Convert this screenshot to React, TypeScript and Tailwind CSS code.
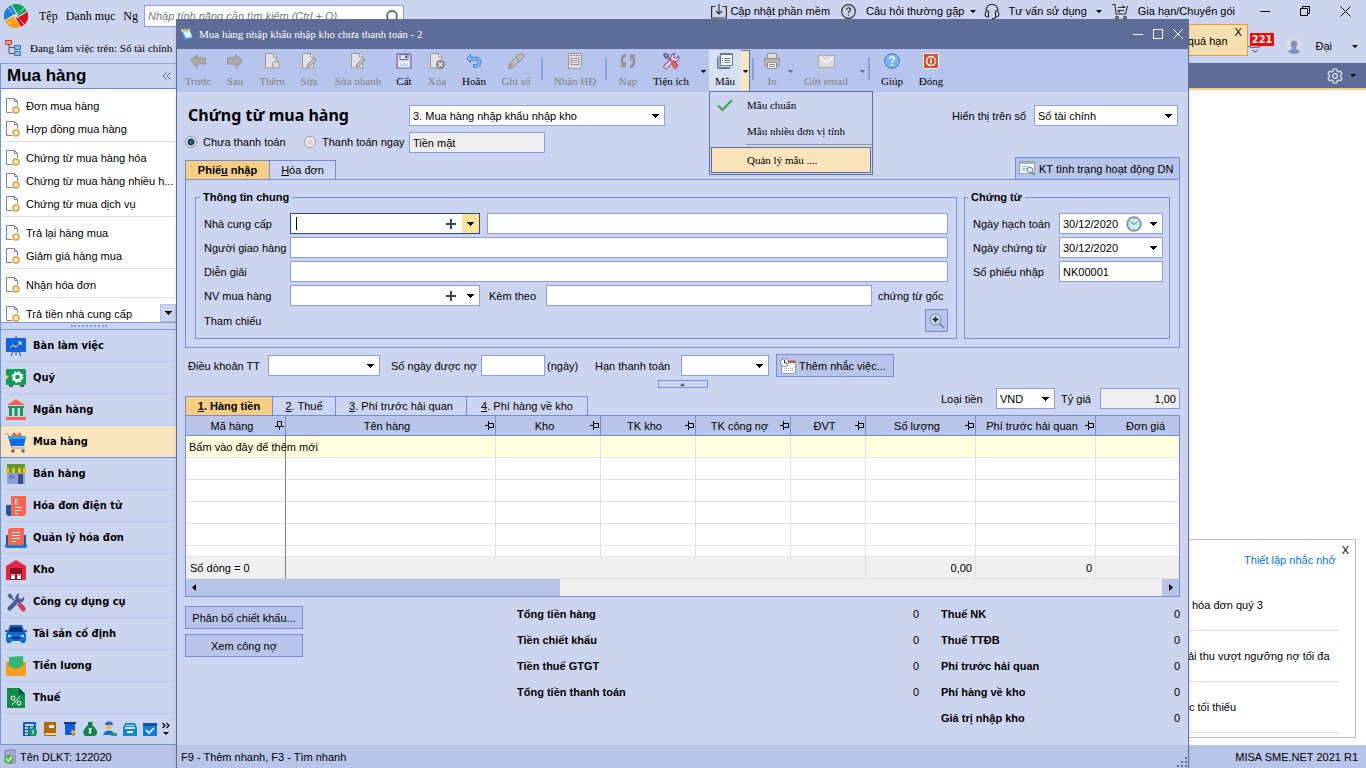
import type { ReactNode } from "react";

const Caret = ({ className = "" }: { className?: string }) => (
  <svg width="7" height="4" viewBox="0 0 7 4" className={`shrink-0 ${className}`} fill="currentColor">
    <path d="M0 0h7v1H6v1H5v1H4v1H3V3H2V2H1V1H0z" />
  </svg>
);

const PlusMark = () => (
  <svg width="10" height="10" viewBox="0 0 10 10" fill="#34457e">
    <path d="M4 0h2v4h4v2H6v4H4V6H0V4h4z" />
  </svg>
);

const DocIcon = () => (
  <svg width="14" height="16" viewBox="0 0 14 16" className="shrink-0">
    <path d="M.5.5h8l3 3v11H.5z" fill="#fff" stroke="#76879c" />
    <path d="M8.5.5v3h3" fill="none" stroke="#76879c" />
    <circle cx="10" cy="12" r="4.5" fill="#fff" />
    <circle cx="10" cy="12" r="3" fill="#ffe9a3" stroke="#c9a44e" strokeWidth="1.4" />
  </svg>
);

const GrayDoc = ({ mark }: { mark: ReactNode }) => (
  <svg width="18" height="18" viewBox="0 0 18 18">
    <path d="M2.5 1.5h8l3 3.5v11h-11z" fill="#e2e2e6" stroke="#999" />
    <path d="M10.5 1.5v3.5h3" fill="#fff" stroke="#999" />
    {mark}
  </svg>
);

const pencilMark = <path d="M7 15l1-3 6-6 2 2-6 6z" fill="#c4c4c4" stroke="#888" />;

const arrowIcon = (
  <svg width="18" height="16" viewBox="0 0 18 16">
    <path d="M1.5 8L8 1.5V5h8.5v6H8v3.5z" fill="#aaa" stroke="#909090" />
  </svg>
);

const toolsPath = (
  <>
    <path d="M13.5 1.5a4.5 4.5 0 0 0-4 6L2 15a2 2 0 0 0 3 3l7.500-7.500a4.5 4.5 0 0 0 5.5-6l-2.5 2.5-2.5-.5-.5-2.5z" />
    <path d="M1.5 3l2-1.5 3 2v2L10 9l-1 1-3.5-3.5h-2z" />
  </>
);

const toolIcons: Record<string, ReactNode> = {
  "Trước": arrowIcon,
  "Sau": <span className="rotate-180">{arrowIcon}</span>,
  "Thêm": <GrayDoc mark={<circle cx="13" cy="13" r="3.5" fill="#ddd" stroke="#aaa" strokeWidth="1.5" />} />,
  "Sửa": <GrayDoc mark={pencilMark} />,
  "Sửa nhanh": <GrayDoc mark={pencilMark} />,
  "Cất": (
    <svg width="16" height="16" viewBox="0 0 16 16">
      <path d="M1 1h13l1 1v13H1z" fill="#e4d2f2" stroke="#8a70ae" strokeWidth="1.4" />
      <path d="M4 1.5h8v5H4z" fill="#d9ebf8" stroke="#6c6a8e" />
      <path d="M9 2.5h2V5H9z" fill="#555" />
      <path d="M3 9h10v5.5H3z" fill="#fff" />
      <path d="M4 11h8M4 13h8" stroke="#7bc0e0" />
    </svg>
  ),
  "Xóa": (
    <GrayDoc
      mark={
        <>
          <circle cx="12.5" cy="12.5" r="4.5" fill="#888" />
          <path d="M10.5 10.5l4 4m0-4l-4 4" stroke="#eee" strokeWidth="1.3" />
        </>
      }
    />
  ),
  "Hoãn": (
    <svg width="18" height="16" viewBox="0 0 18 16">
      <path d="M5.5 1.5v2.800H11a5 5 0 0 1 0 10H8.5v-2.800H11a2.2 2.2 0 0 0 0-4.5H5.5v2.5L1.5 5.5z" fill="#8cc0f4" stroke="#3b7cc8" />
    </svg>
  ),
  "Ghi sổ": (
    <svg width="18" height="18" viewBox="0 0 18 18">
      <path d="M1.5 16.5l2-6 8-8 2-1 3 1v3l-2 2-8 7.5z" fill="#bbb" stroke="#8a8a8a" />
      <path d="M9 6l4 4M2 16l4-5" stroke="#888" />
    </svg>
  ),
  "Nhận HĐ": (
    <svg width="16" height="16" viewBox="0 0 16 16">
      <path d="M1.5.5h13v13l-2 2h-11z" fill="#ddd" stroke="#999" />
      <path d="M3 2.5h10" stroke="#888" strokeDasharray="2 1" />
      <path d="M4 5.5h8v6H4zM4 7.5h8M4 9.5h8" fill="#f2f2f2" stroke="#999" />
    </svg>
  ),
  "Nạp": (
    <svg width="18" height="16" viewBox="0 0 18 16" fill="none" stroke="#8e8e8e" strokeWidth="2.4">
      <path d="M7 2C2.5 3 1.5 9 5 12.5M11 14c4.5-1 5.5-7 2-10.5" />
      <path d="M1.5 13.5H6V9M16.5 2.5H12V7" strokeWidth="1.6" />
    </svg>
  ),
  "Tiện ích": (
    <svg width="18" height="18" viewBox="0 0 19 20" fill="#f0d6ee" stroke="#8660a0" strokeWidth="1.2">
      {toolsPath}
      <path d="M10 11.5l2-2 5 5-1.5 3-2.5.5z" fill="#ee6a6a" stroke="#c44" />
      <path d="M1.5 3l2-1.5 3 2-.5 2-2.5 1z" fill="#8db0c4" stroke="#557" />
    </svg>
  ),
  "Mẫu": (
    <svg width="16" height="16" viewBox="0 0 16 16" fill="#fff" stroke="#5f7893">
      <path d="M3.5.5h12v12h-12z" />
      <path d="M.5 4.5v11h12M2 2.5v12h12" fill="none" />
      <path d="M3.5 1.5h12" />
      <path d="M7.5 5.5h6M7.5 7.5h6M7.5 9.5h6" stroke="#5b83b5" />
      <path d="M5 5.5h1M5 7.5h1M5 9.5h1" />
    </svg>
  ),
  "In": (
    <svg width="18" height="16" viewBox="0 0 18 16" stroke="#929292">
      <path d="M4.5.5h9v5h-9z" fill="#ddd" />
      <path d="M1.5 5.5h15v7h-15z" fill="#b5b5b5" />
      <path d="M4.5 9.5h9v6h-9z" fill="#eee" />
      <path d="M6 11.5h6M6 13.5h6" />
    </svg>
  ),
  "Gửi email": (
    <svg width="17" height="13" viewBox="0 0 17 13">
      <path d="M.5.5h16v12H.5z" fill="#dcdcdc" stroke="#aaa" />
      <path d="M2 2.5l6.500 5 6.500-5" fill="none" stroke="#fff" strokeWidth="1.5" />
    </svg>
  ),
  "Giúp": (
    <svg width="16" height="16" viewBox="0 0 16 16">
      <circle cx="8" cy="8" r="7.3" fill="#7db4f3" stroke="#3e76bd" />
      <path d="M5.7 6.3c0-3.3 4.800-3 4.600-.3-.1 1.600-2.2 1.500-2.2 3.500M8.1 11v1.600" fill="none" stroke="#fff" strokeWidth="1.5" />
    </svg>
  ),
  "Đóng": (
    <svg width="16" height="16" viewBox="0 0 16 16">
      <rect x=".5" y=".5" width="15" height="15" rx="1" fill="#df4a26" stroke="#fff" />
      <circle cx="8" cy="8" r="4.5" fill="none" stroke="#fff" strokeWidth="1.5" />
      <path d="M8 5.5v5" stroke="#fff" strokeWidth="1.6" />
    </svg>
  ),
};

type Tool = { label?: string; width?: string; off?: boolean; caret?: string; active?: boolean };

const tools: Tool[] = [
  { label: "Trước", width: "w-[38px]", off: true },
  { label: "Sau", width: "w-[36px]", off: true },
  { label: "Thêm", width: "w-[38px]", off: true },
  { label: "Sửa", width: "w-[36px]", off: true },
  { label: "Sửa nhanh", width: "w-[62px]", off: true },
  { label: "Cất", width: "w-[30px]" },
  { label: "Xóa", width: "w-[36px]", off: true },
  { label: "Hoãn", width: "w-[38px]" },
  { label: "Ghi sổ", width: "w-[46px]", off: true },
  {},
  { label: "Nhận HĐ", width: "w-[56px]", off: true },
  {},
  { label: "Nạp", width: "w-[34px]", off: true },
  { label: "Tiện ích", width: "w-[52px]", caret: "w-[12px]" },
  { label: "Mẫu", width: "w-[32px]", caret: "w-[9px]", active: true },
  {},
  { label: "In", width: "w-[28px]", off: true, caret: "w-[8px]" },
  { label: "Gửi email", width: "w-[64px]", off: true, caret: "w-[8px]" },
  {},
  { label: "Giúp", width: "w-[36px]" },
  { label: "Đóng", width: "w-[42px]" },
];

function Toolbar() {
  return (
    <div className="flex h-[43px] bg-[#b7c4ec] pl-[2px] font-['Liberation_Serif',serif] text-[11px]">
      {tools.map((t, i) =>
        t.label ? (
          <div key={i} className={`relative flex ${t.active ? "mt-px mb-px bg-[#d6e0f3]" : "pt-px"}`}>
            <button
              disabled={t.off}
              className={`${t.width} flex flex-col items-center whitespace-nowrap pt-px leading-4 ${t.off ? "text-[#7f8087]" : "text-black"}`}
            >
              <span className="flex h-[20px] items-center">{toolIcons[t.label]}</span>
              <span className="pt-[2px]">{t.label}</span>
            </button>
            {t.caret && (
              <button
                disabled={t.off}
                aria-label={`${t.label} - tùy chọn`}
                className={`${t.caret} flex items-center justify-center ${t.off ? "text-[#6c6e78]" : "text-black"} ${t.active ? "border-t border-r border-[#5f6fa3] bg-[#fbe5bd]" : ""}`}
              >
                <Caret className="h-[3px] w-[5px]" />
              </button>
            )}
            {t.active && <TemplateMenu />}
          </div>
        ) : (
          <span key={i} className="mt-[9px] mr-1 ml-[2px] h-[22px] w-[2px] bg-[#7ea6d8]" />
        )
      )}
    </div>
  );
}

function TemplateMenu() {
  return (
    <ul className="absolute top-full left-0 z-10 w-[164px] border border-[#5f6fa3] bg-[#ccd5f0] pb-px text-[11px]">
      <li>
        <button className="flex h-[26px] w-full items-center text-left">
          <svg width="16" height="13" viewBox="0 0 16 13" className="mx-[7px]">
            <path d="M1 6.5l4.500 4.500L15 1" fill="none" stroke="#3bab55" strokeWidth="2.2" />
          </svg>
          <span className="pl-[7px]">Mẫu chuẩn</span>
        </button>
      </li>
      <li>
        <button className="h-[26px] w-full pl-[37px] text-left">Mẫu nhiều đơn vị tính</button>
      </li>
      <li className="ml-[36px] border-t border-[#999]" />
      <li className="px-px pt-[2px]">
        <button className="h-[26px] w-full border border-[#5f6fa3] bg-[#fbe3bb] pl-[35px] text-left">Quản lý mẫu ....</button>
      </li>
    </ul>
  );
}

const purchaseLinks = [
  ["Đơn mua hàng", "Hợp đồng mua hàng"],
  ["Chứng từ mua hàng hóa", "Chứng từ mua hàng nhiều h...", "Chứng từ mua dịch vụ"],
  ["Trả lại hàng mua", "Giảm giá hàng mua"],
  ["Nhận hóa đơn"],
  ["Trả tiền nhà cung cấp"],
];

const modules: { name: string; icon: ReactNode }[] = [
  {
    name: "Bàn làm việc",
    icon: (
      <>
        <path d="M1 3h20v14H1z" fill="#1463de" />
        <path d="M11 1v2M8 17l-2 4M14 17l2 4M11 17v3" stroke="#2a4a8a" />
        <path d="M5 13l3-3 3 2 5-5M13 7h3v3" fill="none" stroke="#fff" />
      </>
    ),
  },
  {
    name: "Quỹ",
    icon: (
      <>
        <rect x="1" y="2" width="20" height="16" rx="1" fill="#109d58" />
        <path d="M4 18h4v2H4zM15 18h4v2h-4z" fill="#555f66" />
        <circle cx="12.500" cy="10" r="3.600" fill="none" stroke="#fff" strokeWidth="2.500" />
        <circle cx="12.500" cy="10" r="5.200" fill="none" stroke="#fff" strokeWidth="1.400" strokeDasharray="2 2.080" />
        <path d="M1 8l3 2-3 2z" fill="#ffd938" />
      </>
    ),
  },
  {
    name: "Ngân hàng",
    icon: (
      <>
        <path d="M11 0l9 6H2zM1 18h20v3H1z" fill="#fb5f50" />
        <path d="M3 7h16v2H3zM4 9h3v8H4zM9.500 9h3v8h-3zM15 9h3v8h-3z" fill="#129a55" />
      </>
    ),
  },
  {
    name: "Mua hàng",
    icon: (
      <>
        <path d="M6 5l3-4 3 3 3-3 2 4z" fill="#df6a45" />
        <path d="M0 3h3l4 14h13" fill="none" stroke="#8a93a8" />
        <path d="M3 5h18l-2 10H6z" fill="#0d6be8" />
        <path d="M3 5h18v3H4z" fill="#31a5f3" />
        <circle cx="8" cy="20" r="1.8" fill="#666" />
        <circle cx="18" cy="20" r="1.8" fill="#666" />
      </>
    ),
  },
  {
    name: "Bán hàng",
    icon: (
      <>
        <path d="M2 9h18v12H2z" fill="#8fa1d8" />
        <path d="M13 11h5v10h-5z" fill="#3d4d86" />
        <path d="M4 12h6v4H4z" fill="#6f85c9" />
        <path d="M2 1h18v5H2z" fill="#5d9b28" />
        <path d="M1 5h20v5H1z" fill="#f9bd1e" />
        <path d="M4 5h3v5H4zM10 5h3v5h-3zM16 5h2v5h-2z" fill="#5d9b28" />
      </>
    ),
  },
  {
    name: "Hóa đơn điện tử",
    icon: (
      <>
        <path d="M1 10h6v11H3l-2-2z" fill="#15599c" />
        <path d="M6 1h15v18l-2 2H6z" fill="#fc6452" />
        <path d="M10 4.500h3M10 6.500h3M10 9h3M10.500 4v5M10 12.500h7M10 15.500h6M10 18.500h3" stroke="#fff" />
      </>
    ),
  },
  {
    name: "Quản lý hóa đơn",
    icon: (
      <>
        <path d="M1 8h20v10H1z" fill="#15599c" />
        <path d="M-1 18h24l-2 3H1z" fill="#1d7cd0" />
        <path d="M5 1h14v16l-2 1H3V3z" fill="#fc6452" />
        <path d="M7 5.500h8M7 8.500h8M7 11.500h8M7 14.500h4" stroke="#fff" />
      </>
    ),
  },
  {
    name: "Kho",
    icon: (
      <>
        <path d="M1 7l10-6 10 6v14H1z" fill="#e8253f" />
        <path d="M5 9h12v12H5z" fill="#8d0f24" />
        <path d="M6 15h4v5H6zM12 15h4v5h-4z" fill="#fff" />
        <path d="M7.500 15h1v2h-1zM13.500 15h1v2h-1z" fill="#c00" />
      </>
    ),
  },
  {
    name: "Công cụ dụng cụ",
    icon: (
      <>
        <g fill="#485c9c" transform="translate(1 1)">{toolsPath}</g>
        <path d="M12 14l3-3 5 5c2 3-1 6-3 4z" fill="#d93550" />
      </>
    ),
  },
  {
    name: "Tài sản cố định",
    icon: (
      <>
        <path d="M5 2h12l3 8H2z" fill="#1463c8" />
        <path d="M6 4h10l2 5H4z" fill="#0d2d66" />
        <path d="M0 7h3v2H0zM19 7h3v2h-3zM1 10h20v8H1zM2 18h4v2H2zM16 18h4v2h-4z" fill="#0d6be8" />
        <path d="M3 12h3v2H3zM16 12h3v2h-3z" fill="#cfe6ff" />
        <path d="M7 14h8v2H7z" fill="#0d2d66" />
      </>
    ),
  },
  {
    name: "Tiền lương",
    icon: (
      <>
        <path d="M1 8l10-6 10 6v12H1z" fill="#e8880c" />
        <path d="M4 2l14-1v12H4z" fill="#2fb876" />
        <path d="M1 9l10 6 10-6v12H1z" fill="#fd9e1c" />
      </>
    ),
  },
  {
    name: "Thuế",
    icon: (
      <>
        <path d="M2 1h12l6 6v14H2z" fill="#118c4b" />
        <path d="M14 1l6 6h-6z" fill="#0a4a35" />
        <path d="M15 9L7 18" stroke="#fff" />
        <circle cx="8" cy="11" r="2" fill="none" stroke="#fff" />
        <circle cx="14" cy="16" r="2" fill="none" stroke="#fff" />
      </>
    ),
  },
];

const quickIcons: { name: string; icon: ReactNode }[] = [
  {
    name: "Giá thành",
    icon: (
      <>
        <path d="M1 1h13v14H1z" fill="#0d5fd0" />
        <path d="M3 4h9M3 7h3M8 7h3M3 10h3M3 13h3" stroke="#fff" strokeWidth="1.5" />
        <circle cx="11" cy="11" r="4" fill="#0f9d58" />
        <path d="M11 9v4" stroke="#fff" />
      </>
    ),
  },
  {
    name: "Sổ cái",
    icon: (
      <>
        <path d="M2 1h12v14H3l-1-1z" fill="#b5660b" />
        <path d="M3 12h11v2H3z" fill="#f5d9a0" />
        <path d="M7 4h5v3H7z" fill="#fff" />
      </>
    ),
  },
  {
    name: "Hợp đồng",
    icon: (
      <>
        <path d="M3 3h10v11H3z" fill="#0d5fe0" />
        <path d="M2 1h12v2H2z" fill="#133b80" />
        <circle cx="11" cy="11" r="2" fill="#ffb31a" />
        <path d="M10 12h2v3h-2z" fill="#f28c0f" />
      </>
    ),
  },
  {
    name: "Ngân sách",
    icon: (
      <>
        <path d="M6 1h5l-1 3c8 6 5 11 2 11H4C1 15-1 10 6 4z" fill="#12824a" />
        <path d="M10 8c-3-2-4 1-2 1.500s2 3-1.500 2M8 7v6" fill="none" stroke="#fff" />
      </>
    ),
  },
  {
    name: "Nhân viên",
    icon: (
      <>
        <circle cx="7" cy="5" r="3.5" fill="#f2b46a" />
        <path d="M3 4c0-5 8-5 8 0z" fill="#1c6fc9" />
        <path d="M1 14c1-6 11-6 12 0z" fill="#1c6fc9" />
        <path d="M9 12h6v3H9z" fill="#23a566" />
      </>
    ),
  },
  {
    name: "Tài liệu",
    icon: (
      <>
        <path d="M3 2h10l2 5v8H1V7z" fill="#1186d8" />
        <path d="M4 4h8v1H4zM3 6h10v2H3z" fill="#cfeaff" />
        <path d="M1 8h14v7H1z" fill="#1186d8" />
        <path d="M5 10h6v2H5z" fill="#fff" />
      </>
    ),
  },
  {
    name: "Công việc",
    icon: (
      <>
        <path d="M1 2h14v13H1z" fill="#0d7fe0" />
        <path d="M1 2h14v3H1z" fill="#114f9e" />
        <path d="M4 9l3 3 5-5" fill="none" stroke="#fff" strokeWidth="1.6" />
      </>
    ),
  },
];

function Sidebar() {
  return (
    <aside className="flex w-44 shrink-0 flex-col border-l border-[#6d97cd] bg-[#ccd5f0]">
      <div className="flex h-[26px] items-center justify-between border-y border-b-[#6b8ad4] border-t-[#8fa3df] pr-[5px] pl-[6px]">
        <h2 className="text-[17px] font-bold">Mua hàng</h2>
        <svg width="9" height="8" viewBox="0 0 9 8" fill="none" stroke="#3f63b5">
          <path d="M4.5.5L1 4l3.500 3.500M8.5.5L5 4l3.500 3.500" />
        </svg>
      </div>
      <nav className="relative h-[234px] overflow-hidden border-b border-[#7f95dc] bg-white pt-[5px]">
        {purchaseLinks.map((group, i) => (
          <ul key={i}>
            {i > 0 && <li className="mt-px mb-1 ml-[2px] h-px bg-[#dedede]" />}
            {group.map((link) => (
              <li key={link} className="flex h-[23px] items-center">
                <a href="#" className="flex items-center gap-[6px] pl-[5px] whitespace-nowrap">
                  <DocIcon />
                  {link}
                </a>
              </li>
            ))}
          </ul>
        ))}
        <button aria-label="Cuộn xuống" className="absolute right-0 bottom-0 flex h-[18px] w-[16px] items-center justify-center border border-[#b5c2e8] bg-[#ccd5f0]">
          <Caret />
        </button>
      </nav>
      <div className="flex h-[7px] items-center justify-center border-b border-[#7f95dc]">
        <div className="w-[36px] border-t-2 border-dotted border-[#8298d0]" />
      </div>
      <ul className="font-['DejaVu_Sans_Condensed','DejaVu_Sans',sans-serif] text-[11px] font-bold">
        {modules.map((m) => (
          <li
            key={m.name}
            className={`h-8 border-b ${m.name === "Mua hàng" ? "border-[#6b8ad4] bg-[#fbe5bf]" : "border-[#b9c5ea]"}`}
          >
            <a href="#" className="flex h-full items-center gap-[6px] pl-1">
              <svg width="22" height="22" viewBox="0 0 22 22" overflow="visible">{m.icon}</svg>
              {m.name}
            </a>
          </li>
        ))}
      </ul>
      <div className="flex flex-1 items-center gap-1 border-b border-[#6d97cd] pl-[21px]">
        {quickIcons.map((q) => (
          <button key={q.name} aria-label={q.name}>
            <svg width="16" height="16" viewBox="0 0 16 16">{q.icon}</svg>
          </button>
        ))}
        <button aria-label="Xem thêm">
          <svg width="8" height="14" viewBox="0 0 8 14">
            <path d="M.5 1L3 3.500.5 6M4.500 1L7 3.500 4.500 6" fill="none" stroke="#000" strokeWidth="1.2" />
            <path d="M1 10h6L4 13z" />
          </svg>
        </button>
      </div>
    </aside>
  );
}

function Header() {
  return (
    <header className="flex h-[63px] justify-between bg-[#ccd5f0]">
      <div>
        <div className="flex h-8 items-center pl-[4px]">
          <svg width="24" height="24" viewBox="0 0 24 24">
            <circle cx="12" cy="12" r="11" fill="#fff" />
            <path d="M7.500.900A12 12 0 0 1 20.500 3.500L13.500 10z" fill="#12a05c" />
            <path d="M23.100 7.500A12 12 0 0 1 20.500 20.500L14 13.500z" fill="#d8101f" />
            <path d="M16.500 23.100A12 12 0 0 1 3.500 20.500L10.500 14z" fill="#ff9a12" />
            <path d="M.900 16.500A12 12 0 0 1 3.500 3.500L10 10.500z" fill="#1a80dc" />
            <path d="M4 3L7.500 1L13 10.500L11 11.500z" fill="#1a80dc" />
            <path d="M21 4L23 7.500L13.500 13L12.500 11z" fill="#12a05c" />
            <path d="M20 21L16.500 23L11 13.500L13 12.500z" fill="#d8101f" />
            <path d="M3 20L1 16.500L10.500 11L11.500 13z" fill="#ff9a12" />
            <path d="M7.500 1L14 12M23 7.500L12 14M16.500 23L10 12M1 16.500L12 10" stroke="#fff" strokeWidth=".800" />
          </svg>
          <nav className="flex w-[116px] gap-2 pl-[11px] font-['Liberation_Serif',serif] text-[12px] whitespace-nowrap">
            <a href="#">Tệp</a>
            <a href="#">Danh mục</a>
            <a href="#">Ng</a>
          </nav>
          <label className="flex h-[22px] w-[260px] items-center border border-[#8b9ede] bg-white pr-1 pl-[3px]">
            <input
              aria-label="Tìm kiếm"
              placeholder="Nhập tính năng cần tìm kiếm (Ctrl + Q)"
              className="min-w-0 flex-1 italic outline-none placeholder:text-[#777]"
            />
            <svg width="14" height="16" viewBox="0 0 14 16" fill="none" stroke="#666" strokeWidth="1.8">
              <circle cx="7" cy="8" r="5" />
              <path d="M10.500 12l3 3" />
            </svg>
          </label>
        </div>
        <div className="flex h-[31px] items-center gap-[8px] pl-[5px] font-['Liberation_Serif',serif] text-[11px]">
          <svg width="17" height="16" viewBox="0 0 17 16">
            <path d="M4 5v8.500h5M4 7.500h5" fill="none" stroke="#555" />
            <path d="M.5.5h6v4h-6z" fill="#f49a90" stroke="#d0392b" />
            <path d="M9.500 5.500h6v4h-6zM9.500 11.500h6v4h-6z" fill="#8ab8ea" stroke="#2f73bd" />
          </svg>
          Đang làm việc trên: Sổ tài chính
        </div>
      </div>

      <div className="flex flex-col items-end">
        <div className="flex h-6 items-center pr-[15px] pb-[2px] whitespace-nowrap">
          <a href="#" className="mr-[11px] flex items-center gap-[3px]">
            <svg width="16" height="15" viewBox="0 0 16 15" fill="none" stroke="#333" strokeWidth="1.2">
              <path d="M4.500 2.500H.600V14h14.800V2.500h-3.900M8 0v9.500M5 7l3 3 3-3" />
            </svg>
            Cập nhật phần mềm
          </a>
          <a href="#" className="mr-[8px] flex items-center gap-[10px]">
            <svg width="15" height="15" viewBox="0 0 15 15" fill="none" stroke="#333" strokeWidth="1.2">
              <circle cx="7.500" cy="7.500" r="6.800" />
              <path d="M5.500 6c0-3 4.500-2.500 4 0-.3 1.200-2 1.300-2 3M7.500 10.500v1.300" />
            </svg>
            <span className="flex items-center gap-[6px]">Câu hỏi thường gặp <Caret className="h-[3px] w-[6px]" /></span>
          </a>
          <a href="#" className="mr-[10px] flex items-center gap-2">
            <svg width="16" height="16" viewBox="0 0 16 16" fill="none" stroke="#333" strokeWidth="1.2">
              <path d="M2 8c0-9 12-9 12 0M4.500 8v6C0 14 0 8 4.500 8zM11.500 8v6c4.500 0 4.500-6 0-6zM12 14c-1 2-3 1.500-4 1.500" />
            </svg>
            <span className="flex items-center gap-[9px]">Tư vấn sử dụng <Caret className="h-[3px] w-[6px]" /></span>
          </a>
          <a href="#" className="mr-[25px] flex items-center gap-[10px]">
            <svg width="16" height="17" viewBox="0 0 16 17" fill="none" stroke="#333" strokeWidth="1.1">
              <path d="M0 1.500h3l1 9.500h9.500l2-8M6 4.500h6.500l-2-2M12 7.500H6l2 2" />
              <circle cx="5" cy="14.500" r="1.300" />
              <circle cx="13" cy="14.500" r="1.300" />
            </svg>
            Gia hạn/Chuyển gói
          </a>
          <span className="flex items-center gap-[30px]">
            <button aria-label="Thu nhỏ" className="w-[10px] border-t border-black" />
            <button aria-label="Khôi phục">
              <svg width="10" height="10" viewBox="0 0 10 10" fill="none" stroke="#000">
                <path d="M.5 2.500h7v7h-7zM2.500 2.500v-2h7v7h-2" />
              </svg>
            </button>
            <button aria-label="Đóng ứng dụng">
              <svg width="11" height="11" viewBox="0 0 11 11" stroke="#000">
                <path d="M.5.5l10 10m0-10l-10 10" />
              </svg>
            </button>
          </span>
        </div>
        <div className="flex h-[39px] items-start pr-2">
          <div className="flex h-8 w-[61px] justify-between border border-[#f59a3c] bg-[#f4dfae] pr-[5px]">
            <span className="pt-[8px] whitespace-nowrap">quá hạn</span>
            <button aria-label="Đóng thông báo" className="self-start leading-[14px]">X</button>
          </div>
          <span className="relative mt-[9px] ml-[2px] bg-[#f80505] px-[2px] font-['DejaVu_Sans_Condensed','DejaVu_Sans',sans-serif] text-[11px] leading-[13px] font-bold text-white">
            221
            <svg width="14" height="7" viewBox="0 0 14 7" className="absolute top-full -left-[2px]" fill="none" stroke="#555">
              <path d="M0 0c2 2 10 2 13 0M4 4l3 2 3-2" />
            </svg>
          </span>
          <div className="ml-[12px] flex items-center gap-[13px] pt-[14px]">
            <svg width="16" height="16" viewBox="0 0 16 16">
              <circle cx="8" cy="8" r="8" fill="#dcdde2" />
              <path d="M8 2.500c4 0 4 5 2 7.500 0 2 4 1.500 4 4-3 2.500-9 2.500-12 0 0-2.500 4-2 4-4-2-2.500-2-7.500 2-7.500z" fill="#8291c2" />
            </svg>
            <span>Đại</span>
            <Caret className="ml-[7px] h-[3px] w-[6px]" />
          </div>
        </div>
      </div>
    </header>
  );
}

const reminders = [
  { text: "hóa đơn quý 3", pad: "pl-[4px]" },
  { text: "ải thu vượt ngưỡng nợ tối đa", pad: "pl-0" },
  { text: "c tối thiểu", pad: "pl-px" },
];

function Workspace() {
  return (
    <main className="flex min-w-0 flex-1 flex-col items-stretch bg-white">
      <div className="flex h-[27px] items-center justify-end gap-[7px] border-b-2 border-[#f7cd81] bg-[#5e6c99] pr-[10px]">
        <button aria-label="Thiết lập">
          <svg width="16" height="16" viewBox="0 0 16 16" fill="none" stroke="#e8ecf8" strokeWidth="1.2">
            <path d="M6.500 1h3l.5 2 1.500 1 2-.7 1.500 2.600L13.500 7.400v1.200l1.500 1.500-1.500 2.600-2-.7-1.500 1-.5 2h-3L6 13l-1.500-1-2 .7L1 10.100l1.500-1.500V7.400L1 5.900l1.500-2.600 2 .7L6 3z" />
            <circle cx="8" cy="8" r="2.300" />
          </svg>
        </button>
        <Caret className="h-[3px] w-[6px]" />
      </div>
      <div className="flex flex-1 items-end justify-end pr-[10px] pb-[7px]">
        <section className="flex h-[199px] w-[168px] flex-col border border-l-0 border-[#bbb]">
          <div className="flex justify-end gap-[6px] pr-[6px]">
            <a href="#" className="pt-[12px] whitespace-nowrap text-[#0078d7]">Thiết lập nhắc nhở</a>
            <button aria-label="Đóng nhắc nhở" className="self-start pt-[2px]">X</button>
          </div>
          <ul className="mt-auto mr-[15px] mb-[4px]">
            {reminders.map((r) => (
              <li key={r.text} className={`flex h-[51px] items-center border-b border-[#ddd] whitespace-nowrap ${r.pad}`}>
                {r.text}
              </li>
            ))}
          </ul>
        </section>
      </div>
    </main>
  );
}

const fieldBase = "h-[21px] border border-[#8b9ede] bg-white";

type FieldProps = {
  id: string;
  width: string;
  label?: string;
  align?: string;
  defaultValue?: string;
  disabled?: boolean;
};

function Field({ id, width, label, align = "", ...props }: FieldProps) {
  return (
    <input
      id={id}
      aria-label={label}
      className={`${fieldBase} ${width} ${align} px-[3px] outline-none disabled:bg-[#efefef] disabled:text-black`}
      {...props}
    />
  );
}

function Select({ id, width, options }: { id: string; width: string; options: string[] }) {
  return (
    <span className={`${fieldBase} ${width} relative flex items-center`}>
      <select id={id} className="h-full w-full appearance-none truncate pr-4 pl-[3px] outline-none">
        {options.map((o) => (
          <option key={o}>{o}</option>
        ))}
      </select>
      <Caret className="pointer-events-none absolute right-[5px]" />
    </span>
  );
}

// Text box with a quick add button and a lookup button
function Lookup({ id, focused }: { id: string; focused?: boolean }) {
  return (
    <span className={`flex h-[21px] w-[190px] items-center border bg-white ${focused ? "border-[#34457e]" : "border-[#8b9ede]"}`}>
      {focused && <span className="ml-[5px] h-[13px] w-px bg-black" />}
      <input id={id} className="min-w-0 flex-1 px-1 outline-none" />
      <button aria-label="Thêm nhanh" className="px-[6px]">
        <PlusMark />
      </button>
      <button aria-label="Chọn" className={`flex h-full w-[17px] items-center justify-center ${focused ? "bg-[#ffe49b]" : ""}`}>
        <Caret />
      </button>
    </span>
  );
}

function DateField({ id, clock }: { id: string; clock?: boolean }) {
  return (
    <span className={`${fieldBase} flex w-[104px] items-center pr-[5px]`}>
      <input id={id} defaultValue="30/12/2020" className="min-w-0 flex-1 pl-[3px] outline-none" />
      {clock && (
        <svg width="16" height="16" viewBox="0 0 16 16" className="mr-[8px]">
          <circle cx="8" cy="8" r="6.800" fill="#c8f0f5" stroke="#87949e" strokeWidth="1.8" />
          <path d="M4.500 5.500L8 8.500l3.500-3" fill="none" stroke="#4d7585" />
          <path d="M8 2.500v1M8 12.500v1M2.500 8h1M12.500 8h1" stroke="#e4703f" />
        </svg>
      )}
      <Caret />
    </span>
  );
}

const actionBtn = "flex items-center border border-[#768cd6] bg-[#b8c4e8]";

function ReceiptPanel() {
  return (
    <section>
      <div className="flex items-end justify-between">
        <div className="flex" role="tablist">
          <button role="tab" aria-selected="true" className="h-[19px] w-[84px] border-t border-l border-[#768cd6] bg-[#f7cd81] font-bold">
            Phiế<u>u</u> nhập
          </button>
          <button role="tab" aria-selected="false" className="h-[19px] w-[67px] border border-b-0 border-[#768cd6]">
            <u>H</u>óa đơn
          </button>
        </div>
        <button className="flex h-[22px] w-[165px] items-center gap-1 border border-b-0 border-[#768cd6] bg-[#b8c4e8] pl-[3px] whitespace-nowrap">
          <svg width="16" height="15" viewBox="0 0 16 15">
            <path d="M.5.5h15v12H.5z" fill="#fff" stroke="#91a5b8" />
            <path d="M1 1h14v2H1z" fill="#9db6ca" />
            <path d="M3 5.500h7M3 7.500h5M3 9.500h5" stroke="#8bbce6" />
            <circle cx="11" cy="9" r="2.800" fill="#cfeefa" stroke="#75889b" />
            <path d="M13 11l2.500 3" stroke="#75889b" strokeWidth="1.8" />
          </svg>
          KT tình trạng hoạt động DN
        </button>
      </div>
      <div className="flex gap-[7px] border border-[#768cd6] px-[9px] pt-[9px] pb-2">
        <fieldset className="flex min-w-0 flex-1 flex-col gap-[3px] border border-[#768cd6] pr-2 pb-[6px] pl-2">
          <legend className="-ml-[4px] px-[3px] leading-4 font-bold">Thông tin chung</legend>
          <div className="mt-[8px] flex items-center">
            <label htmlFor="supplier" className="w-[86px] whitespace-nowrap">Nhà cung cấp</label>
            <Lookup id="supplier" focused />
            <Field id="supplier-name" label="Tên nhà cung cấp" width="ml-[7px] min-w-0 flex-1" />
          </div>
          <div className="flex items-center">
            <label htmlFor="deliverer" className="w-[86px] whitespace-nowrap">Người giao hàng</label>
            <Field id="deliverer" width="min-w-0 flex-1" />
          </div>
          <div className="flex items-center">
            <label htmlFor="note" className="w-[86px]">Diễn giải</label>
            <Field id="note" width="min-w-0 flex-1" />
          </div>
          <div className="flex items-center">
            <label htmlFor="buyer" className="w-[86px] whitespace-nowrap">NV mua hàng</label>
            <Lookup id="buyer" />
            <label htmlFor="attached" className="ml-[9px] w-[57px]">Kèm theo</label>
            <Field id="attached" width="min-w-0 flex-1" />
            <span className="w-[76px] pl-[6px]">chứng từ gốc</span>
          </div>
          <div className="flex items-center justify-between">
            <span>Tham chiếu</span>
            <button aria-label="Chọn tham chiếu" className={`${actionBtn} h-[23px] w-[23px] justify-center`}>
              <svg width="16" height="16" viewBox="0 0 16 16">
                <path d="M9.500 9.500l5.500 5.500" stroke="#8295ab" strokeWidth="2.4" />
                <circle cx="6.500" cy="6.500" r="5.300" fill="#d6f0fb" stroke="#8295ab" strokeWidth="1.3" />
                <path d="M6.500 3.500v6M3.500 6.500h6" stroke="#222b44" strokeWidth="2" />
              </svg>
            </button>
          </div>
        </fieldset>
        <fieldset className="flex w-[206px] flex-col gap-[3px] border border-[#768cd6] pr-[6px] pl-2">
          <legend className="-ml-[5px] px-[3px] leading-4 font-bold">Chứng từ</legend>
          <div className="mt-[8px] flex items-center justify-between">
            <label htmlFor="posted">Ngày hạch toán</label>
            <DateField id="posted" clock />
          </div>
          <div className="flex items-center justify-between">
            <label htmlFor="doc-date">Ngày chứng từ</label>
            <DateField id="doc-date" />
          </div>
          <div className="flex items-center justify-between">
            <label htmlFor="doc-no">Số phiếu nhập</label>
            <Field id="doc-no" width="w-[104px]" defaultValue="NK00001" />
          </div>
        </fieldset>
      </div>
    </section>
  );
}

const columns = [
  { name: "Mã hàng", width: "w-[100px]", pinned: true },
  { name: "Tên hàng", width: "w-[210px]" },
  { name: "Kho", width: "w-[105px]" },
  { name: "TK kho", width: "w-[95px]" },
  { name: "TK công nợ", width: "w-[95px]" },
  { name: "ĐVT", width: "w-[75px]" },
  { name: "Số lượng", width: "w-[110px]" },
  { name: "Phí trước hải quan", width: "w-[120px]" },
  { name: "Đơn giá", width: "" },
];

const rowHeights = ["h-[22px]", "h-[22px]", "h-[22px]", "h-[22px]", "h-[11px]"];

function ItemsGrid() {
  return (
    <div className="border border-[#768cd6]">
      <table className="w-full table-fixed border-separate border-spacing-0 bg-white">
        <thead>
          <tr className="h-[20px] bg-[#b8c4e8]">
            {columns.map((c) => (
              <th key={c.name} className={`${c.width} border-b border-[#768cd6] p-0 font-normal not-last:border-r`}>
                <div className="flex items-center pr-px pl-[3px]">
                  <span className={`flex-1 whitespace-nowrap ${c.width ? "text-center" : "pr-[13px] text-right"}`}>{c.name}</span>
                  {c.width && (
                    <svg width="9" height="9" viewBox="0 0 9 9" fill="none" stroke="#000" className={c.pinned ? "rotate-90 -scale-x-100" : ""}>
                      <path d="M0 4.500h3M3.500 0v9M3.500 2.500h5v4h-5" />
                    </svg>
                  )}
                </div>
              </th>
            ))}
          </tr>
        </thead>
        <tbody>
          <tr className="h-[22px] bg-[#ffffdd]">
            {columns.map((c, i) => (
              <td key={c.name} className={`border-b border-b-[#e2e2e2] p-0 pl-[3px] whitespace-nowrap not-last:border-r ${i ? "border-r-[#e2e2e2]" : "border-r-[#808080]"}`}>
                {i === 0 && "Bấm vào đây để thêm mới"}
              </td>
            ))}
          </tr>
          {rowHeights.map((h, r) => (
            <tr key={r} className={h}>
              {columns.map((c, i) => (
                <td key={c.name} className={`border-b border-b-[#e2e2e2] p-0 not-last:border-r ${i ? "border-r-[#e2e2e2]" : "border-r-[#808080]"}`} />
              ))}
            </tr>
          ))}
        </tbody>
        <tfoot>
          <tr className="h-[22px] bg-[#efefef]">
            <td className="border-r border-b border-r-[#808080] border-b-[#e2e2e2] p-0 pl-1">Số dòng = 0</td>
            <td colSpan={5} className="border-r border-b border-[#e2e2e2] p-0" />
            <td className="border-r border-b border-[#e2e2e2] p-0 pr-[3px] text-right">0,00</td>
            <td className="border-r border-b border-[#e2e2e2] p-0 pr-[3px] text-right">0</td>
            <td className="border-b border-[#e2e2e2] p-0" />
          </tr>
        </tfoot>
      </table>
      <div className="flex h-[17px] justify-between bg-[#efefef]">
        <div className="flex w-[374px] items-center bg-[#b8c4e8] pl-[6px]">
          <svg width="4" height="7" viewBox="0 0 4 7"><path d="M4 0v7L0 3.500z" /></svg>
        </div>
        <button aria-label="Cuộn sang phải" className="flex w-[17px] items-center justify-center bg-[#b8c4e8]">
          <svg width="4" height="7" viewBox="0 0 4 7"><path d="M0 0v7l4-3.500z" /></svg>
        </button>
      </div>
    </div>
  );
}

const detailTabs = [
  { no: "1", name: "Hàng tiền", width: "w-[88px]" },
  { no: "2", name: "Thuế", width: "w-[64px]" },
  { no: "3", name: "Phí trước hải quan", width: "w-[132px]" },
  { no: "4", name: "Phí hàng về kho", width: "w-[122px]" },
];

const Totals = ({ items, width }: { items: string[]; width: string }) => (
  <dl className={width}>
    {items.map((label) => (
      <div key={label} className="flex h-[26px] items-center justify-between pb-[10px]">
        <dt className="font-bold">{label}</dt>
        <dd>0</dd>
      </div>
    ))}
  </dl>
);

function VoucherWindow() {
  return (
    <div role="dialog" aria-label="Chứng từ mua hàng" className="absolute top-[19px] right-[177px] bottom-0 left-44 flex flex-col border-x border-[#5e6c99] bg-[#ccd5f0] shadow-md">
      <div className="flex h-[30px] shrink-0 items-center bg-[#5e6c99] pr-[5px] pl-[3px] text-white">
        <svg width="14" height="14" viewBox="0 0 14 14">
          <path d="M1 3l9-1 3 9-8 2z" fill="#3c9df0" />
          <path d="M3 5l7-1 2 6-6 1z" fill="#dff2ff" />
          <path d="M1 2h2l1 2 1-3 2 3 1-3 2 3-8 1z" fill="#ffd94a" />
        </svg>
        <h1 className="flex-1 pl-[5px] font-['Liberation_Serif',serif] text-[11px]">Mua hàng nhập khẩu nhập kho chưa thanh toán - 2</h1>
        <span className="flex items-center gap-[10px]">
          <button aria-label="Thu nhỏ" className="w-[10px] border-t border-white" />
          <button aria-label="Phóng to" className="h-[10px] w-[10px] border border-white" />
          <button aria-label="Đóng">
            <svg width="10" height="10" viewBox="0 0 10 10" stroke="#fff"><path d="M0 0l10 10M10 0L0 10" /></svg>
          </button>
        </span>
      </div>
      <Toolbar />

      <div className="flex flex-1 flex-col px-2">
        <div className="flex items-start justify-between pt-[13px]">
          <div className="grid grid-cols-[224px_auto] items-center gap-y-[6px]">
            <label htmlFor="voucher" className="pl-[3px] font-['Noto_Sans',sans-serif] text-[16px] leading-[21px] font-bold whitespace-nowrap">Chứng từ mua hàng</label>
            <Select id="voucher" width="w-[256px]" options={["3. Mua hàng nhập khẩu nhập kho"]} />
            <div className="flex items-center pb-px">
              <label className="flex w-[119px] items-center gap-[6px]">
                <input type="radio" name="pay" defaultChecked className="h-3 w-3 appearance-none rounded-full border border-[#8e8f8f] bg-[radial-gradient(circle,#1e86ad_0,#0d3650_3px,#eee_4px)]" />
                Chưa thanh toán
              </label>
              <label className="flex items-center gap-[6px] whitespace-nowrap">
                <input type="radio" name="pay" className="h-3 w-3 appearance-none rounded-full border border-[#9c9c9c] bg-[radial-gradient(circle,#ccc_0,#f4f4f4_5px)]" />
                Thanh toán ngay
              </label>
            </div>
            <Field id="method" label="Hình thức thanh toán" width="w-[136px]" defaultValue="Tiền mặt" disabled />
          </div>
          <div className="flex items-center gap-2 pr-[2px]">
            <label htmlFor="book">Hiển thị trên sổ</label>
            <Select id="book" width="w-[144px]" options={["Sổ tài chính"]} />
          </div>
        </div>

        <div className="mt-1">
          <ReceiptPanel />
        </div>

        <div className="flex items-center pt-[6px] pl-[3px] whitespace-nowrap">
          <label htmlFor="terms" className="w-[80px]">Điều khoản TT</label>
          <Select id="terms" width="w-[112px]" options={[""]} />
          <label htmlFor="days" className="w-[101px] pl-[11px]">Số ngày được nợ</label>
          <Field id="days" width="w-[64px]" />
          <span className="w-[50px] pl-[2px]">(ngày)</span>
          <label htmlFor="due" className="w-[86px]">Hạn thanh toán</label>
          <Select id="due" width="w-[88px]" options={[""]} />
          <button className={`${actionBtn} ml-[7px] h-[23px] w-[118px] gap-[3px] pl-[3px]`}>
            <svg width="16" height="16" viewBox="0 0 16 16">
              <path d="M1.500 3.500h14v12h-14z" fill="#fff" stroke="#8c9db3" />
              <path d="M6 2.500h9.500V5H6z" fill="#d94545" />
              <path d="M4 10.500h10M4 12.500h10" stroke="#aab" strokeDasharray="1 1" />
              <circle cx="4.500" cy="4.500" r="4" fill="#fff" stroke="#5e7fae" />
              <path d="M4.500 2v3H7" fill="none" stroke="#333" />
            </svg>
            Thêm nhắc việc...
          </button>
        </div>

        <button aria-label="Thu gọn" className="mt-[3px] flex h-2 w-[50px] items-center justify-center self-center border border-[#768cd6]">
          <svg width="5" height="3" viewBox="0 0 5 3" fill="#555"><path d="M0 3h5L2.500 0z" /></svg>
        </button>

        <div className="flex items-end justify-between">
          <div className="flex" role="tablist">
            {detailTabs.map((t, i) => (
              <button
                key={t.no}
                role="tab"
                aria-selected={i === 0}
                className={`${t.width} -mr-px h-[19px] border border-b-0 border-[#768cd6] whitespace-nowrap ${i === 0 ? "bg-[#f7cd81] font-bold" : ""}`}
              >
                <u>{t.no}</u>. {t.name}
              </button>
            ))}
          </div>
          <div className="mb-[6px] flex items-center">
            <label htmlFor="currency" className="w-[55px]">Loại tiền</label>
            <Select id="currency" width="w-[59px]" options={["VND"]} />
            <label htmlFor="rate" className="w-[45px] pl-[6px]">Tỷ giá</label>
            <Field id="rate" width="w-[80px]" align="text-right" defaultValue="1,00" disabled />
          </div>
        </div>
        <ItemsGrid />

        <div className="flex pt-[9px]">
          <div className="flex w-[332px] flex-col gap-[5px]">
            <button className={`${actionBtn} h-[23px] w-[118px] justify-center`}>Phân bổ chiết khấu...</button>
            <button className={`${actionBtn} h-[23px] w-[118px] justify-center`}>Xem công nợ</button>
          </div>
          <Totals width="w-[402px]" items={["Tổng tiền hàng", "Tiền chiết khấu", "Tiền thuế GTGT", "Tổng tiền thanh toán"]} />
          <Totals width="ml-[22px] flex-1" items={["Thuế NK", "Thuế TTĐB", "Phí trước hải quan", "Phí hàng về kho", "Giá trị nhập kho"]} />
        </div>
      </div>

      <footer className="flex h-[23px] shrink-0 items-center justify-between bg-[#b8c4e8] pl-1">
        F9 - Thêm nhanh, F3 - Tìm nhanh
        <svg width="12" height="12" viewBox="0 0 12 12" fill="#5e6c99" className="self-end">
          <path d="M9 1h2v2H9zM9 5h2v2H9zM5 5h2v2H5zM9 9h2v2H9zM5 9h2v2H5zM1 9h2v2H1z" />
        </svg>
      </footer>
    </div>
  );
}

export default function App() {
  return (
    <div className="relative flex min-h-screen flex-col overflow-hidden bg-[#ccd5f0] font-['Liberation_Sans',Arial,sans-serif] text-[11px] leading-4 text-black">
      <Header />
      <div className="flex flex-1">
        <Sidebar />
        <Workspace />
      </div>
      <footer className="flex h-[23px] items-center justify-between bg-[#b8c4e8] pr-2 pl-1">
        <span className="flex items-center gap-1">
          <svg width="12" height="15" viewBox="0 0 12 15">
            <path d="M1 2l7-2 4 2v11l-5 2-6-2z" fill="#a9a6d8" stroke="#7f7cb0" />
            <circle cx="5" cy="10" r="4.500" fill="#4db83c" />
            <path d="M2.500 10l2 2 3.500-4" fill="none" stroke="#fff" strokeWidth="1.5" />
          </svg>
          Tên DLKT: 122020
        </span>
        <span>MISA SME.NET 2021 R1</span>
      </footer>
      <VoucherWindow />
    </div>
  );
}
